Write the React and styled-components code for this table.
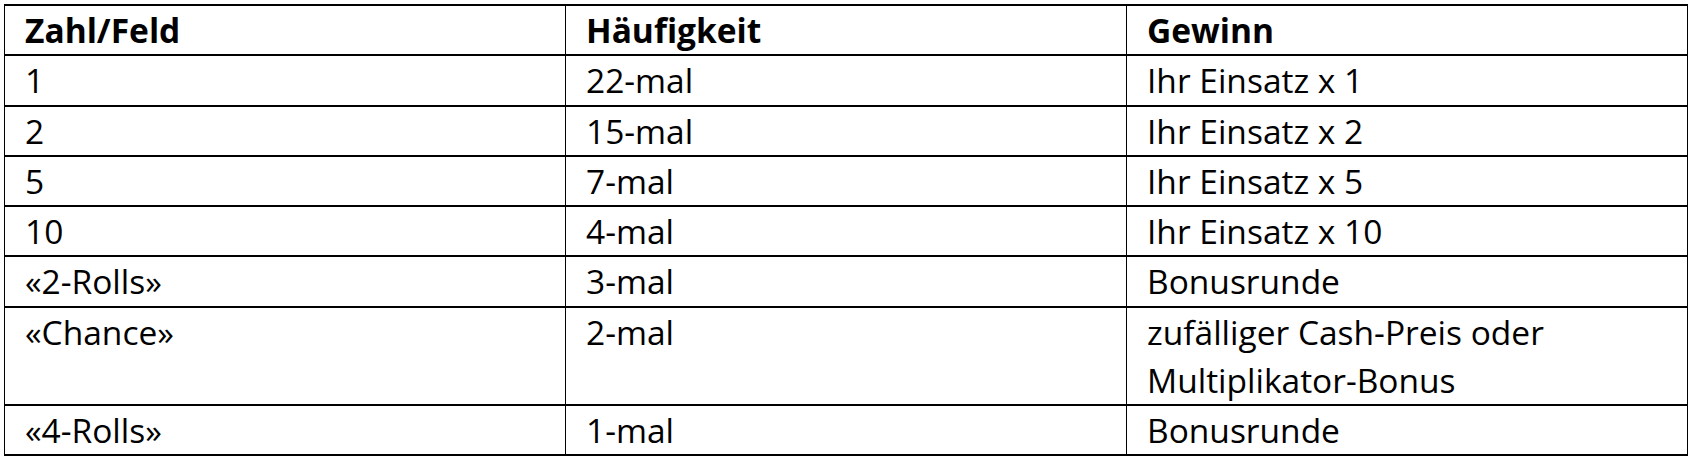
import styled, { createGlobalStyle } from "styled-components";

const GlobalStyle = createGlobalStyle`
  html, body {
    margin: 0;
    padding: 0;
    background: #ffffff;
  }
  body {
    font-family: "Open Sans", Lato, sans-serif;
    color: #000000;
  }
`;

const Page = styled.div`
  padding: 4px 0 0 4px;
`;

const Table = styled.div`
  display: grid;
  grid-template-columns: 561px 561px 561px;
  width: 1683px;
  border-top: 2px solid #000;
  border-left: 1px solid #000;
`;

const Cell = styled.div`
  box-sizing: border-box;
  border-right: 1px solid #000;
  border-bottom: 2px solid #000;
  padding: 0 10px 0 20px;
  min-height: ${(p) => (p.$short ? "46px" : "50.3px")};
  font-size: 33.5px;
  line-height: 48px;
  font-weight: ${(p) => (p.$head ? 700 : 400)};
`;

const rows = [
  ["1", "22-mal", "Ihr Einsatz x 1"],
  ["2", "15-mal", "Ihr Einsatz x 2"],
  ["5", "7-mal", "Ihr Einsatz x 5"],
  ["10", "4-mal", "Ihr Einsatz x 10"],
  ["«2-Rolls»", "3-mal", "Bonusrunde"],
  ["«Chance»", "2-mal", "zufälliger Cash-Preis oder Multiplikator-Bonus"],
  ["«4-Rolls»", "1-mal", "Bonusrunde"],
];

export default function App() {
  return (
    <Page>
      <GlobalStyle />
      <Table>
        <Cell $head>Zahl/Feld</Cell>
        <Cell $head>Häufigkeit</Cell>
        <Cell $head>Gewinn</Cell>
        {rows.map((r, i) =>
          r.map((c, j) => (
            <Cell key={`${i}-${j}`} $short={i === rows.length - 1}>
              {c}
            </Cell>
          ))
        )}
      </Table>
    </Page>
  );
}
